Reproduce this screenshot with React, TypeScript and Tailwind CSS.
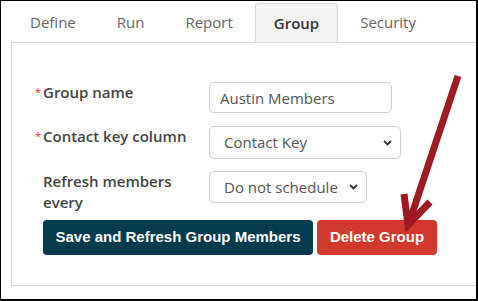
import type { ReactNode } from "react"

const tabs = ["Define", "Run", "Report", "Group", "Security"]

function Chevron() {
  return (
    <svg
      className="pointer-events-none absolute right-[8px] top-1/2 -translate-y-1/2"
      width="9"
      height="6"
      viewBox="0 0 9 6"
    >
      <path d="M1 1l3.5 3.5L8 1" fill="none" stroke="#333" strokeWidth="1.8" />
    </svg>
  )
}

function Row({ required, label, children, className }: { required?: boolean; label: ReactNode; children: ReactNode; className?: string }) {
  return (
    <div className={`grid grid-cols-[174px_auto] ${className ?? ""}`}>
      <div className="flex">
        <span className="w-2 pt-[4px] text-[11px] leading-[12px] text-[#e41b1b]">{required ? "*" : ""}</span>
        <span className="w-[158px] text-[15px] font-semibold leading-[21px] text-[#444]">{label}</span>
      </div>
      <div>{children}</div>
    </div>
  )
}

export default function App() {
  return (
    <div
      className="relative h-[301px] w-[478px] overflow-hidden border-b-2 border-l border-r-2 border-t border-black bg-white pl-[10px]"
      style={{ fontFamily: '"Open Sans", sans-serif' }}
    >
      <ul className="mt-[2px] flex h-[39px] gap-[3px]">
        {tabs.map((t) =>
          t === "Group" ? (
            <li
              key={t}
              className="flex items-center rounded-t-[4px] border border-b-0 border-[#d6d6d6] bg-[#f4f4f4] px-[18px] text-[15px] font-semibold text-[#333]"
            >
              {t}
            </li>
          ) : (
            <li key={t} className="flex items-center border border-transparent px-[18px] text-[15px] text-[#666]">
              {t}
            </li>
          )
        )}
      </ul>
      <div className="w-[480px] border-b border-l border-t border-[#dcdcdc] pb-[30px] pl-[23px] pt-[39px]">
        <Row required label="Group name" className="h-[31px]">
          <input
            readOnly
            value="Austin Members"
            className="h-[31px] w-[183px] rounded-[5px] border border-[#cfcfcf] px-[10px] text-[15px] text-[#555] outline-none"
          />
        </Row>
        <Row required label="Contact key column" className="mt-[13px] h-[33px]">
          <div className="relative h-[33px] w-[192px] rounded-[5px] border border-[#cfcfcf] pl-[14px] text-[15px] leading-[31px] text-[#555]">
            Contact Key
            <Chevron />
          </div>
        </Row>
        <Row label="Refresh members every" className="mt-[12px]">
          <div className="relative h-[32px] w-[158px] rounded-[5px] border border-[#cfcfcf] pl-[14px] text-[15px] leading-[30px] text-[#555]">
            Do not schedule
            <Chevron />
          </div>
        </Row>
        <div
          className="ml-2 mt-[7px] flex gap-[4px] text-[15px] font-bold text-white"
          style={{ fontFamily: '"Liberation Sans", Arial, sans-serif' }}
        >
          <button className="h-[35px] w-[270px] rounded-[4px] bg-[#063b4d]">Save and Refresh Group Members</button>
          <button className="h-[35px] w-[120px] rounded-[4px] bg-[#d2382b]">Delete Group</button>
        </div>
      </div>
      <svg className="pointer-events-none absolute left-0 top-0" width="478" height="301">
        <line x1="457" y1="75" x2="409" y2="219" stroke="#9e1a23" strokeWidth="7" />
        <polyline points="403,193 407,224 429,201" fill="none" stroke="#9e1a23" strokeWidth="7" strokeLinejoin="miter" />
      </svg>
    </div>
  )
}
